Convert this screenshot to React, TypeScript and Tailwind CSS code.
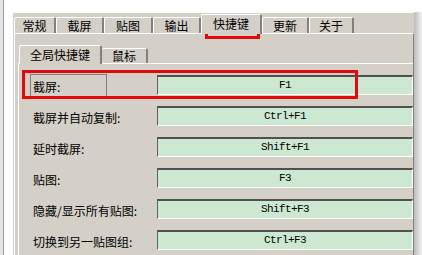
import React from "react";

const cjk = { fontFamily: '"Noto Sans CJK SC", "Noto Sans", sans-serif' };
const mono = { fontFamily: '"Liberation Mono", "DejaVu Sans Mono", monospace' };

const tabs = [
  { label: "常规", w: "w-[42px]" },
  { label: "截屏", w: "w-[48px]" },
  { label: "贴图", w: "w-[49px]" },
  { label: "输出", w: "w-[48px]" },
  { label: "快捷键", w: "w-[61px]", active: true },
  { label: "更新", w: "w-[47px]" },
  { label: "关于", w: "w-[45px]" },
];

const rows = [
  { label: "截屏:", key: "F1", boxed: true },
  { label: "截屏并自动复制:", key: "Ctrl+F1" },
  { label: "延时截屏:", key: "Shift+F1" },
  { label: "贴图:", key: "F3" },
  { label: "隐藏/显示所有贴图:", key: "Shift+F3" },
  { label: "切换到另一贴图组:", key: "Ctrl+F3" },
];

function Tab({ label, w, active }: { label: string; w: string; active?: boolean }) {
  if (active) {
    return (
      <div
        className={`${w} h-[20px] -mb-px relative z-10 bg-[#d4d0c8] border-l border-t border-white border-r-2 border-r-[#808080] rounded-t-[2px] flex items-center justify-center text-[12px] leading-[12px] text-black pb-[2px]`}
      >
        {label}
      </div>
    );
  }
  return (
    <div
      className={`${w} h-[16px] bg-[#d4d0c8] border-l border-t border-white border-r-2 border-r-[#808080] rounded-t-[2px] flex items-center justify-center text-[12px] leading-[12px] text-black`}
    >
      {label}
    </div>
  );
}

export default function App() {
  return (
    <div className="w-[422px] h-[255px] bg-white relative overflow-hidden flex" style={cjk}>
      <div className="w-[3px] h-full bg-[#e4e4e4] border-r border-[#9a9a9a] box-content" />
      <div className="w-[8px] h-full bg-white" />
      <div className="mt-[12px] w-[402px] h-[243px] bg-[#d4d0c8] border-l border-t border-white flex flex-col pl-[1px] pt-[1px]">
        {/* main tab strip */}
        <div className="h-[19px] flex items-end">
          {tabs.map((t) => (
            <Tab key={t.label} {...t} />
          ))}
        </div>
        {/* main tab page */}
        <div className="flex-1 border-t border-l border-white border-r border-r-[#808080] pt-[11px] pl-[3px] flex flex-col">
          {/* sub tab strip */}
          <div className="h-[18px] flex items-end pl-[1px]">
            <div className="w-[83px] h-[19px] -mb-px relative z-10 bg-[#d4d0c8] border-l border-t border-white border-r-2 border-r-[#808080] rounded-t-[2px] flex items-center justify-center text-[12px] leading-[12px] pb-[1px]">
              全局快捷键
            </div>
            <div className="w-[46px] h-[15px] bg-[#d4d0c8] border-t border-white border-r-2 border-r-[#808080] rounded-t-[2px] flex items-center justify-center text-[12px] leading-[12px]">
              鼠标
            </div>
          </div>
          {/* sub page */}
          <div className="flex-1 border-t border-l border-white pl-[11px] pt-[10px] flex flex-col">
            {rows.map((r) => (
              <div key={r.label} className="h-[31px] shrink-0 flex items-start">
                <div
                  className={`w-[77px] h-[23px] shrink-0 pl-[2px] pt-[6px] text-[12px] leading-[12px] whitespace-nowrap text-black ${
                    r.boxed ? "border border-[#808080] border-b-white" : "border border-transparent"
                  }`}
                >
                  {r.label}
                </div>
                <div
                  className="ml-[50px] mt-[1px] w-[256px] h-[20px] shrink-0 bg-[#cde8d0] border-t-2 border-l border-t-[#505050] border-l-[#606060] border-r border-b border-r-white border-b-white flex items-center justify-center text-[11px] tracking-[-0.6px] text-black"
                  style={mono}
                >
                  {r.key}
                </div>
              </div>
            ))}
          </div>
        </div>
      </div>
      <div className="flex-1 mt-[12px] bg-gradient-to-r from-[#bcbcbc] to-[#f2f2f2]" />

      {/* red annotations */}
      <div className="absolute left-[205px] top-[15px] w-[55px] h-[24px] border-[3px] border-[#e20a0a]" />
      <div className="absolute left-[22px] top-[70px] w-[336px] h-[29px] border-[3px] border-[#e20a0a]" />
    </div>
  );
}
